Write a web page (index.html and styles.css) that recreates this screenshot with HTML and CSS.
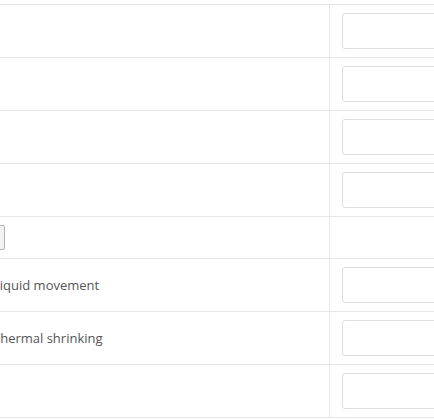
FILE: index.html
```html
<!DOCTYPE html>
<html lang="en">
  <head>
    <meta charset="UTF-8" />
    <title>Properties</title>
    <link rel="stylesheet" href="styles.css">
  </head>
  <body>
    <div class="wrap">
      <table class="props">
        <colgroup>
          <col class="col-label" />
          <col class="col-value" />
        </colgroup>
        <tbody>
          <tr>
            <td class="label"></td>
            <td class="value"><input type="text" class="field" /></td>
          </tr>
          <tr>
            <td class="label"></td>
            <td class="value"><input type="text" class="field" /></td>
          </tr>
          <tr>
            <td class="label"></td>
            <td class="value"><input type="text" class="field" /></td>
          </tr>
          <tr>
            <td class="label"></td>
            <td class="value"><input type="text" class="field" /></td>
          </tr>
          <tr>
            <td class="label"><button type="button" class="small-btn"></button></td>
            <td class="value"></td>
          </tr>
          <tr>
            <td class="label">Liquid movement</td>
            <td class="value"><input type="text" class="field" /></td>
          </tr>
          <tr>
            <td class="label">Thermal shrinking</td>
            <td class="value"><input type="text" class="field" /></td>
          </tr>
          <tr>
            <td class="label"></td>
            <td class="value"><input type="text" class="field" /></td>
          </tr>
        </tbody>
      </table>
    </div>
  </body>
</html>
```

FILE: styles.css
```css
body {
  margin: 0;
  overflow: hidden;
  background: #fff;
  font-family: "Open Sans", Arial, sans-serif;
  font-size: 13px;
  color: #555;
}

.wrap {
  padding-top: 4px;
  margin-left: -15px;
}

.props {
  width: 600px;
  table-layout: fixed;
  border-collapse: collapse;
}

.col-label {
  width: 344px;
}

.col-value {
  width: 256px;
}

.props td {
  border-top: 1px solid #e6e6e6;
  border-bottom: 1px solid #e6e6e6;
  padding: 8px;
  vertical-align: middle;
  white-space: nowrap;
}

.props td.value {
  border-left: 1px solid #e8e8e8;
  padding: 8px 12px;
}

.field {
  display: block;
  box-sizing: border-box;
  width: 220px;
  height: 36px;
  border: 1px solid #dedede;
  border-radius: 3px;
  background: #fff;
  padding: 6px 10px;
  font: inherit;
}

.small-btn {
  display: block;
  box-sizing: border-box;
  width: 12px;
  height: 25px;
  padding: 0;
  border: 1px solid #b3b3b3;
  border-radius: 2px;
  background: #f2f2f2;
}
```
